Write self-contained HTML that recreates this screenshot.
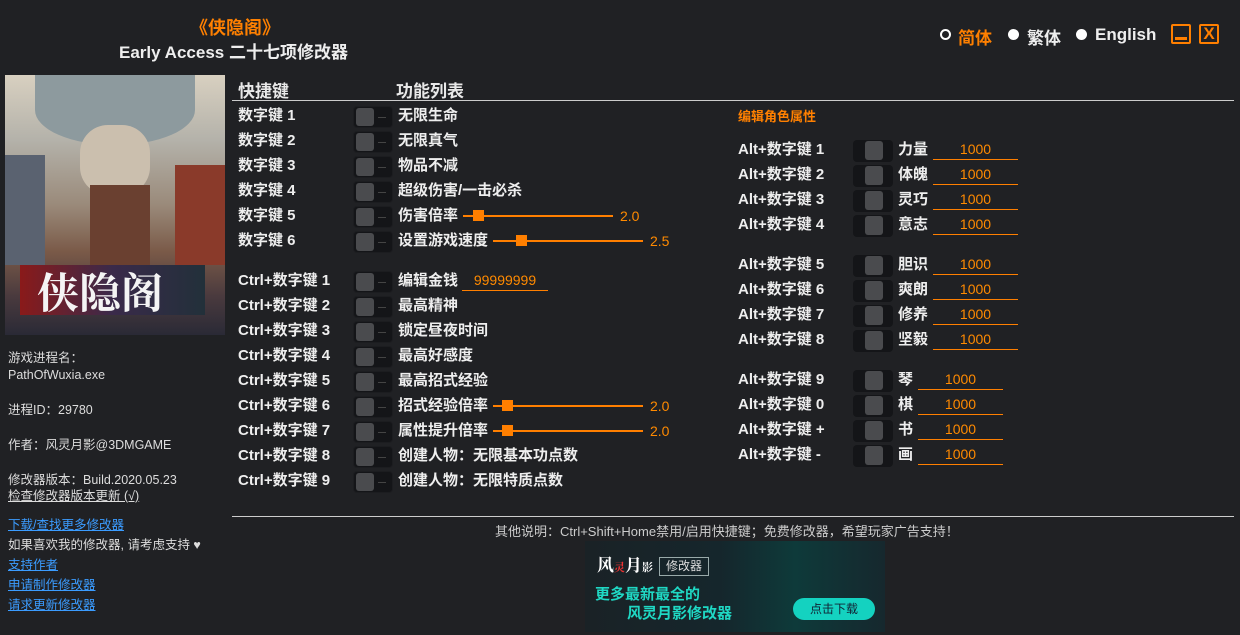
<!DOCTYPE html><html><head><meta charset="utf-8"><style>
*{margin:0;padding:0;box-sizing:border-box}
body{width:1240px;height:635px;background:#202124;color:#e8e8e8;font-family:"Liberation Sans","Noto Sans CJK SC",sans-serif;position:relative;overflow:hidden}
.a{position:absolute;white-space:nowrap}
.k{font-weight:bold;font-size:15px;color:#eee;line-height:20px}
.f{font-weight:bold;font-size:15px;color:#eee;line-height:20px}
.t{position:absolute;width:40px;height:22px;background:#141518;border-radius:4px;border:1px solid #1c1d20}
.t::before{content:"";position:absolute;left:2px;top:1px;width:18px;height:18px;background:#4a4b4e;border-radius:3px}
.t::after{content:"";position:absolute;left:24px;top:10px;width:8px;height:1px;background:#444}
.r{position:absolute;width:40px;height:22px;background:#141518;border-radius:4px}
.r::before{content:"";position:absolute;left:12px;top:1px;width:18px;height:19px;background:#4a4b4e;border-radius:3px}
.s{position:absolute;height:2px;background:#ff7f00}
.h{position:absolute;width:11px;height:11px;background:#ff7f00}
.v{color:#ff8a00;font-size:14px;line-height:20px}
.in{position:absolute;border-bottom:1px solid #ff7f00;color:#ff8a00;font-size:14px;text-align:center;line-height:19px}
.sm{font-size:12.5px;color:#ddd;line-height:16px}
.lk{color:#3b9cff;text-decoration:underline;font-size:12.5px;line-height:16px}
</style></head><body>
<div class="a" style="left:190px;top:14px;color:#ff8000;font-size:18px;font-weight:bold">《侠隐阁》</div>
<div class="a" style="left:119px;top:38px;font-size:17px;font-weight:bold;color:#eee">Early Access 二十七项修改器</div>
<div class="a" style="left:940px;top:29px;width:11px;height:11px;border:2px solid #fff;border-radius:50%"></div>
<div class="a" style="left:958px;top:24px;color:#ff8000;font-size:17px;font-weight:bold">简体</div>
<div class="a" style="left:1008px;top:29px;width:11px;height:11px;background:#fff;border-radius:50%"></div>
<div class="a" style="left:1027px;top:24px;color:#eee;font-size:17px;font-weight:bold">繁体</div>
<div class="a" style="left:1076px;top:29px;width:11px;height:11px;background:#fff;border-radius:50%"></div>
<div class="a" style="left:1095px;top:25px;color:#eee;font-size:17px;font-weight:bold">English</div>
<div class="a" style="left:1171px;top:24px;width:20px;height:20px;border:2px solid #ff7f00;border-radius:2px"><div style="position:absolute;left:2px;right:2px;bottom:2px;height:3px;background:#ff7f00"></div></div>
<div class="a" style="left:1199px;top:24px;width:20px;height:20px;border:2px solid #ff7f00;border-radius:2px;color:#ff7f00;font-weight:bold;font-size:17px;text-align:center;line-height:16px">X</div>

<div class="a" style="left:5px;top:75px;width:220px;height:260px;overflow:hidden;background:linear-gradient(180deg,#d8d0c0 0%,#b4b2aa 25%,#9a8a7a 50%,#7a5a48 68%,#4a3a3e 85%,#2a2a36 100%)">
<div style="position:absolute;left:30px;top:0;width:160px;height:70px;background:#8d9a9e;border-radius:0 0 50% 50%"></div>
<div style="position:absolute;left:75px;top:50px;width:70px;height:70px;background:#cbbfae;border-radius:40%"></div>
<div style="position:absolute;left:0;top:80px;width:40px;height:110px;background:#5a6270"></div>
<div style="position:absolute;left:170px;top:90px;width:50px;height:100px;background:#8a3a2a"></div>
<div style="position:absolute;left:85px;top:110px;width:60px;height:90px;background:#6a4030"></div>
<div style="position:absolute;left:15px;top:190px;width:185px;height:50px;background:linear-gradient(90deg,#8a1a1a,#3a2a4a,#22303a)"></div>
<div style="position:absolute;left:32px;top:186px;color:#f4f4f4;font-size:42px;font-family:'Noto Serif CJK SC',serif;font-weight:bold">侠隐阁</div>
</div>

<div class="a sm" style="left:8px;top:350px">游戏进程名：</div>
<div class="a sm" style="left:8px;top:367px">PathOfWuxia.exe</div>
<div class="a sm" style="left:8px;top:402px">进程ID：29780</div>
<div class="a sm" style="left:8px;top:437px">作者：风灵月影@3DMGAME</div>
<div class="a sm" style="left:8px;top:472px">修改器版本：Build.2020.05.23</div>
<div class="a sm" style="left:8px;top:488px;text-decoration:underline">检查修改器版本更新 (√)</div>
<div class="a lk" style="left:8px;top:517px">下载/查找更多修改器</div>
<div class="a sm" style="left:8px;top:537px">如果喜欢我的修改器, 请考虑支持 ♥</div>
<div class="a lk" style="left:8px;top:557px">支持作者</div>
<div class="a lk" style="left:8px;top:577px">申请制作修改器</div>
<div class="a lk" style="left:8px;top:597px">请求更新修改器</div>

<div class="a" style="left:238px;top:77px;font-size:17px;font-weight:bold">快捷键</div>
<div class="a" style="left:396px;top:77px;font-size:17px;font-weight:bold">功能列表</div>
<div class="a" style="left:232px;top:100px;width:1002px;height:1px;background:#ccc"></div>

<div class="a k" style="left:238px;top:106px">数字键 1</div><div class="t" style="left:353px;top:106px"></div><div class="a f" style="left:398px;top:106px">无限生命</div>
<div class="a k" style="left:238px;top:131px">数字键 2</div><div class="t" style="left:353px;top:131px"></div><div class="a f" style="left:398px;top:131px">无限真气</div>
<div class="a k" style="left:238px;top:156px">数字键 3</div><div class="t" style="left:353px;top:156px"></div><div class="a f" style="left:398px;top:156px">物品不减</div>
<div class="a k" style="left:238px;top:181px">数字键 4</div><div class="t" style="left:353px;top:181px"></div><div class="a f" style="left:398px;top:181px">超级伤害/一击必杀</div>
<div class="a k" style="left:238px;top:206px">数字键 5</div><div class="t" style="left:353px;top:206px"></div><div class="a f" style="left:398px;top:206px">伤害倍率</div>
<div class="s" style="left:463px;top:215px;width:150px"></div><div class="h" style="left:473px;top:210px"></div><div class="a v" style="left:620px;top:206px">2.0</div>
<div class="a k" style="left:238px;top:231px">数字键 6</div><div class="t" style="left:353px;top:231px"></div><div class="a f" style="left:398px;top:231px">设置游戏速度</div>
<div class="s" style="left:493px;top:240px;width:150px"></div><div class="h" style="left:516px;top:235px"></div><div class="a v" style="left:650px;top:231px">2.5</div>

<div class="a k" style="left:238px;top:271px">Ctrl+数字键 1</div><div class="t" style="left:353px;top:271px"></div><div class="a f" style="left:398px;top:271px">编辑金钱</div><div class="in" style="left:462px;top:271px;width:86px">99999999</div>
<div class="a k" style="left:238px;top:296px">Ctrl+数字键 2</div><div class="t" style="left:353px;top:296px"></div><div class="a f" style="left:398px;top:296px">最高精神</div>
<div class="a k" style="left:238px;top:321px">Ctrl+数字键 3</div><div class="t" style="left:353px;top:321px"></div><div class="a f" style="left:398px;top:321px">锁定昼夜时间</div>
<div class="a k" style="left:238px;top:346px">Ctrl+数字键 4</div><div class="t" style="left:353px;top:346px"></div><div class="a f" style="left:398px;top:346px">最高好感度</div>
<div class="a k" style="left:238px;top:371px">Ctrl+数字键 5</div><div class="t" style="left:353px;top:371px"></div><div class="a f" style="left:398px;top:371px">最高招式经验</div>
<div class="a k" style="left:238px;top:396px">Ctrl+数字键 6</div><div class="t" style="left:353px;top:396px"></div><div class="a f" style="left:398px;top:396px">招式经验倍率</div>
<div class="s" style="left:493px;top:405px;width:150px"></div><div class="h" style="left:502px;top:400px"></div><div class="a v" style="left:650px;top:396px">2.0</div>
<div class="a k" style="left:238px;top:421px">Ctrl+数字键 7</div><div class="t" style="left:353px;top:421px"></div><div class="a f" style="left:398px;top:421px">属性提升倍率</div>
<div class="s" style="left:493px;top:430px;width:150px"></div><div class="h" style="left:502px;top:425px"></div><div class="a v" style="left:650px;top:421px">2.0</div>
<div class="a k" style="left:238px;top:446px">Ctrl+数字键 8</div><div class="t" style="left:353px;top:446px"></div><div class="a f" style="left:398px;top:446px">创建人物：无限基本功点数</div>
<div class="a k" style="left:238px;top:471px">Ctrl+数字键 9</div><div class="t" style="left:353px;top:471px"></div><div class="a f" style="left:398px;top:471px">创建人物：无限特质点数</div>

<div class="a" style="left:738px;top:106px;color:#ff8000;font-size:13px;font-weight:bold">编辑角色属性</div>
<div class="a k" style="left:738px;top:140px">Alt+数字键 1</div><div class="r" style="left:853px;top:140px"></div><div class="a f" style="left:898px;top:140px">力量</div><div class="in" style="left:933px;top:140px;width:85px">1000</div>
<div class="a k" style="left:738px;top:165px">Alt+数字键 2</div><div class="r" style="left:853px;top:165px"></div><div class="a f" style="left:898px;top:165px">体魄</div><div class="in" style="left:933px;top:165px;width:85px">1000</div>
<div class="a k" style="left:738px;top:190px">Alt+数字键 3</div><div class="r" style="left:853px;top:190px"></div><div class="a f" style="left:898px;top:190px">灵巧</div><div class="in" style="left:933px;top:190px;width:85px">1000</div>
<div class="a k" style="left:738px;top:215px">Alt+数字键 4</div><div class="r" style="left:853px;top:215px"></div><div class="a f" style="left:898px;top:215px">意志</div><div class="in" style="left:933px;top:215px;width:85px">1000</div>
<div class="a k" style="left:738px;top:255px">Alt+数字键 5</div><div class="r" style="left:853px;top:255px"></div><div class="a f" style="left:898px;top:255px">胆识</div><div class="in" style="left:933px;top:255px;width:85px">1000</div>
<div class="a k" style="left:738px;top:280px">Alt+数字键 6</div><div class="r" style="left:853px;top:280px"></div><div class="a f" style="left:898px;top:280px">爽朗</div><div class="in" style="left:933px;top:280px;width:85px">1000</div>
<div class="a k" style="left:738px;top:305px">Alt+数字键 7</div><div class="r" style="left:853px;top:305px"></div><div class="a f" style="left:898px;top:305px">修养</div><div class="in" style="left:933px;top:305px;width:85px">1000</div>
<div class="a k" style="left:738px;top:330px">Alt+数字键 8</div><div class="r" style="left:853px;top:330px"></div><div class="a f" style="left:898px;top:330px">坚毅</div><div class="in" style="left:933px;top:330px;width:85px">1000</div>
<div class="a k" style="left:738px;top:370px">Alt+数字键 9</div><div class="r" style="left:853px;top:370px"></div><div class="a f" style="left:898px;top:370px">琴</div><div class="in" style="left:918px;top:370px;width:85px">1000</div>
<div class="a k" style="left:738px;top:395px">Alt+数字键 0</div><div class="r" style="left:853px;top:395px"></div><div class="a f" style="left:898px;top:395px">棋</div><div class="in" style="left:918px;top:395px;width:85px">1000</div>
<div class="a k" style="left:738px;top:420px">Alt+数字键 +</div><div class="r" style="left:853px;top:420px"></div><div class="a f" style="left:898px;top:420px">书</div><div class="in" style="left:918px;top:420px;width:85px">1000</div>
<div class="a k" style="left:738px;top:445px">Alt+数字键 -</div><div class="r" style="left:853px;top:445px"></div><div class="a f" style="left:898px;top:445px">画</div><div class="in" style="left:918px;top:445px;width:85px">1000</div>

<div class="a" style="left:232px;top:516px;width:1002px;height:1px;background:#ccc"></div>
<div class="a" style="left:495px;top:521px;font-size:13px;color:#ccc">其他说明：Ctrl+Shift+Home禁用/启用快捷键；免费修改器，希望玩家广告支持！</div>

<div class="a" style="left:585px;top:541px;width:300px;height:91px;background:linear-gradient(90deg,#1a2226 0%,#15262c 45%,#0e3a3a 70%,#16282e 100%);overflow:hidden">
<div style="position:absolute;left:12px;top:10px;color:#fff;font-size:17px;font-weight:bold;font-family:'Noto Serif CJK SC',serif">风<span style="color:#e33;font-size:11px">灵</span>月<span style="font-size:11px">影</span></div>
<div style="position:absolute;left:74px;top:16px;width:50px;height:19px;border:1px solid #9aa;color:#ddd;font-size:12px;text-align:center;line-height:17px">修改器</div>
<div style="position:absolute;left:10px;top:42px;color:#1fd8c4;font-size:15px;font-weight:bold">更多最新最全的</div>
<div style="position:absolute;left:42px;top:61px;color:#1fd8c4;font-size:15px;font-weight:bold">风灵月影修改器</div>
<div style="position:absolute;left:208px;top:57px;width:82px;height:22px;background:#14d2c0;border-radius:11px;color:#123;font-size:12px;text-align:center;line-height:22px">点击下载</div>
</div>
</body></html>
